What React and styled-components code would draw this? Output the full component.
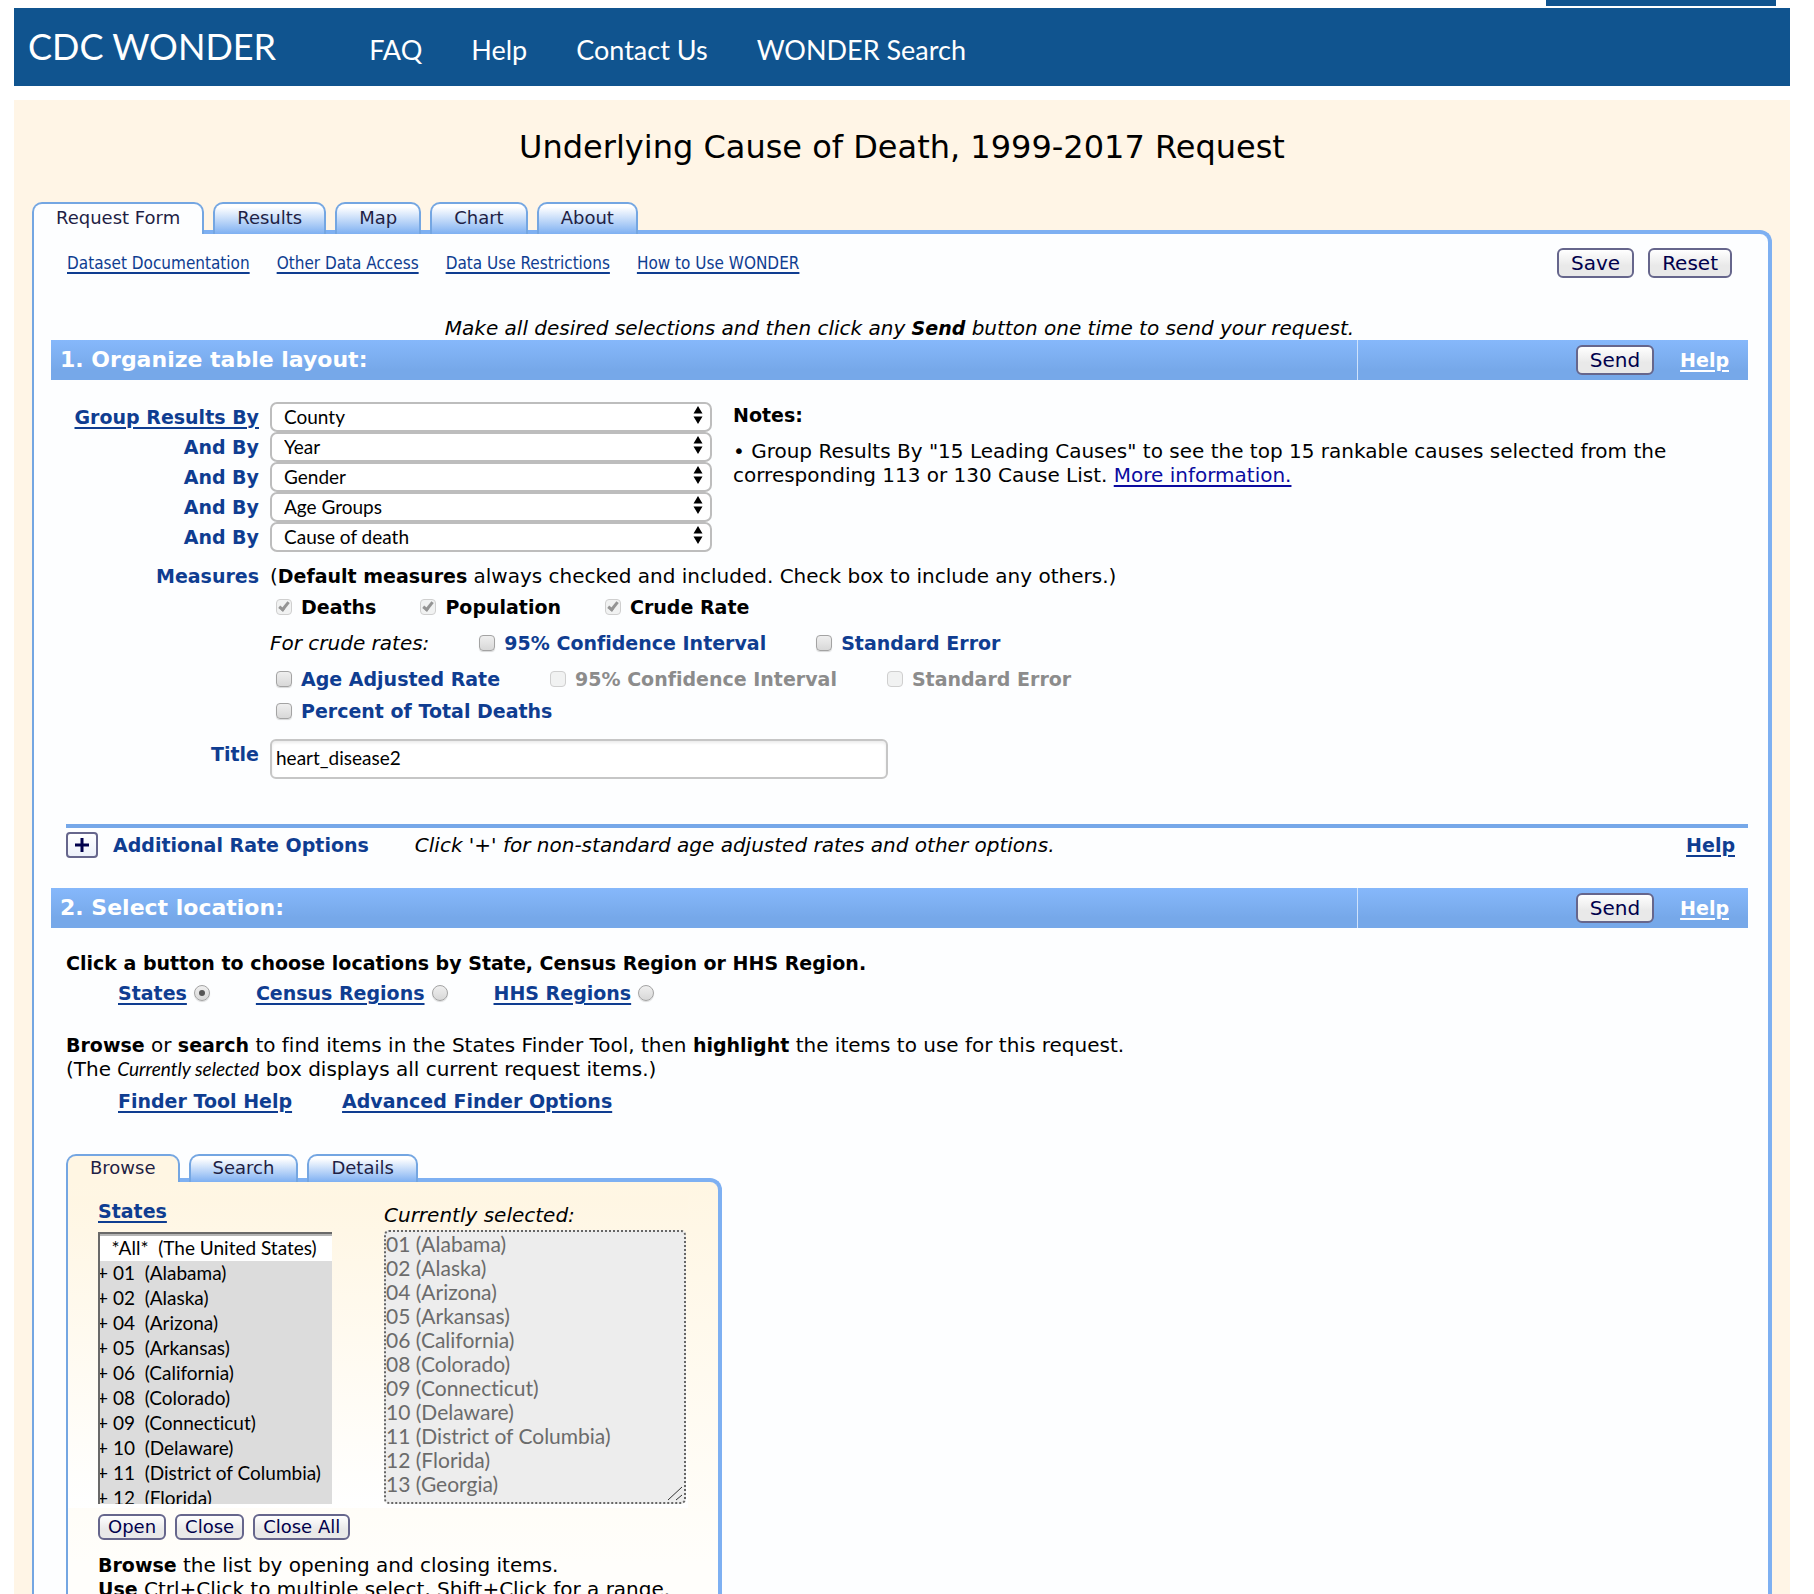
import React from 'react';
import styled, { createGlobalStyle, css } from 'styled-components';

const sans = '"DejaVu Sans", Verdana, sans-serif';
const humanist = 'Lato, Calibri, sans-serif';
const navy = '#0f3d91';
const edge = '#7eb0f2';

const GlobalStyle = createGlobalStyle`
  *, *::before, *::after { box-sizing: border-box; }
  body {
    margin: 0;
    background: #fff;
    color: #000;
    font: 20px/24px ${sans};
    font-variant-ligatures: none;
  }
  h1, h2, h3, p { margin: 0; }
  b, strong { font-size: 19px; }
`;

const Shell = styled.div`
  height: 100vh;
  overflow: auto;
  scrollbar-width: none;
  padding: 0 24px 0 14px;
`;

const TopStrip = styled.div`
  width: 230px;
  height: 6px;
  margin: 0 14px 2px auto;
  background: #10548f;
`;

const Header = styled.header`
  display: flex;
  align-items: baseline;
  height: 78px;
  padding: 16px 14px;
  margin-bottom: 14px;
  background: #10548f;
  color: #fff;
  font-family: ${humanist};
`;

const Brand = styled.a`
  color: inherit;
  text-decoration: none;
  font-size: 36px;
  line-height: 44px;
  margin-right: 93px;
`;

const Nav = styled.nav`
  display: flex;
  gap: 49px;
  font-size: 27px;
`;

const NavLink = styled.a`
  color: inherit;
  text-decoration: none;
`;

const Main = styled.main`
  min-height: calc(100% - 100px);
  padding: 27px 18px 0;
  background: #fff5e6;
`;

const PageTitle = styled.h1`
  margin-bottom: 35px;
  font-size: 32px;
  font-weight: 400;
  line-height: 40px;
  text-align: center;
`;

const TabBar = styled.div`
  position: relative;
  display: flex;
  gap: 9px;
  margin-bottom: -4px;
`;

const Tab = styled.button`
  height: ${(p) => (p.$small ? 28 : 32)}px;
  padding: 0 22px 2px;
  border: 2px solid #74a6e2;
  border-bottom: 0;
  border-radius: 10px 10px 0 0;
  background: ${(p) => p.$fill || 'linear-gradient(#fff 10%, #7eb0f2)'};
  color: #1f1f45;
  font: 18px/24px ${sans};
`;

const Panel = styled.section`
  border: solid ${edge};
  border-width: 4px 4px 0 2px;
  border-left-color: #74a6e2;
  border-radius: 0 12px 0 0;
`;

const FormPanel = styled(Panel)`
  min-height: 1500px;
  padding: 14px 20px 0 17px;
  background: #fdfeff;
`;

const Toolbar = styled.div`
  display: flex;
  align-items: center;
  justify-content: space-between;
  padding: 0 16px 0 15px;
  margin-bottom: 38px;
`;

const Cluster = styled.div`
  display: flex;
  align-items: center;
  gap: ${(p) => p.$gap}px;
  padding-left: ${(p) => p.$inset || 0}px;
  margin-top: ${(p) => p.$top || 0}px;
`;

const underline = css`
  text-decoration: underline;
  text-decoration-thickness: 2px;
  text-underline-offset: 3px;
`;

const DocLink = styled.a`
  ${underline}
  color: ${navy};
  font: 17px/26px "DejaVu Sans Condensed", Tahoma, sans-serif;
`;

const BoldLink = styled.a`
  ${underline}
  color: ${(p) => (p.$light ? '#fff' : navy)};
  font-size: 19px;
  font-weight: 700;
`;

const InlineLink = styled.a`
  ${underline}
  color: #0b0ba0;
`;

const Button = styled.button`
  height: 30px;
  padding: 0 12px;
  border: 2px solid #66668c;
  border-radius: 6px;
  background: linear-gradient(#fff, #e9e9e9 60%);
  color: #00004c;
  font: 20px/24px ${sans};
`;

const SmallButton = styled(Button)`
  height: 26px;
  padding: 0 8px;
  font-size: 18px;
  line-height: 22px;
`;

const ToggleButton = styled(SmallButton)`
  display: flex;
  align-items: center;
  justify-content: center;
  width: 32px;
  padding: 0;
  border-radius: 4px;
  background: linear-gradient(#fff, #edf1fa);
`;

const Instruction = styled.p`
  font-style: italic;
  text-align: center;
`;

const SectionBar = styled.header`
  display: flex;
  height: 40px;
  background: linear-gradient(#86b8fb, #76a8e9 75%);
  color: #fff;
`;

const SectionTitle = styled.h2`
  flex: 1;
  padding: 8px 9px;
  border-right: 1px solid #cfe2fb;
  font-size: 22px;
  line-height: 24px;
`;

const SectionActions = styled.div`
  display: flex;
  align-items: center;
  justify-content: flex-end;
  gap: 26px;
  width: 23%;
  padding-right: 19px;
`;

const LayoutRow = styled.div`
  display: flex;
  gap: 21px;
  padding-top: 22px;
  margin-bottom: 12px;
`;

const FieldRow = styled.div`
  display: grid;
  grid-template-columns: 208px auto;
  column-gap: 11px;
  align-items: ${(p) => p.$align || 'center'};
  margin-top: ${(p) => p.$top || 0}px;
`;

const FieldLabel = styled.label`
  color: ${navy};
  font-size: 19px;
  font-weight: 700;
  text-align: right;
  ${(p) => p.$linked && underline}
`;

const SelectWrap = styled.div`
  position: relative;
  width: 442px;
  height: 30px;
`;

const Select = styled.select`
  appearance: none;
  width: 100%;
  height: 100%;
  padding: 0 32px 2px 12px;
  border: 2px solid #bdbdbd;
  border-radius: 7px;
  background: #fff;
  color: #000;
  font: 19px ${humanist};
`;

const Arrows = styled.svg`
  position: absolute;
  top: 4px;
  right: 9px;
  pointer-events: none;
`;

const Notes = styled.aside`
  flex: 1;
  padding-top: 1px;
`;

const NotesTitle = styled.h3`
  margin-bottom: 12px;
  font-size: 19px;
`;

const Check = styled.label`
  display: flex;
  align-items: center;
  gap: 9px;
  color: ${(p) => (p.$muted ? '#8c8c8c' : p.$plain ? '#000' : navy)};
  font-size: 19px;
  font-weight: 700;
`;

const Tick = styled.input`
  appearance: none;
  display: grid;
  place-items: center;
  width: 16px;
  height: 16px;
  margin: 0;
  border: 1px solid #a3a3a3;
  border-radius: ${(p) => (p.type === 'radio' ? '50%' : '4px')};
  background: linear-gradient(#efefef, #d8d8d8);
  box-shadow: 0 1px 1px rgba(0, 0, 0, 0.15);
  &:disabled {
    border-color: #cfcfcf;
    background: #f1f2f2;
    box-shadow: none;
  }
  &[type='checkbox']:checked::after {
    content: '';
    width: 6px;
    height: 11px;
    margin-bottom: 3px;
    border: solid #949494;
    border-width: 0 3px 3px 0;
    transform: rotate(38deg);
  }
  &[type='radio']:checked::after {
    content: '';
    width: 6px;
    height: 6px;
    border-radius: 50%;
    background: #555;
  }
`;

const TitleInput = styled.input`
  width: 618px;
  height: 40px;
  padding: 0 4px 3px;
  border: 2px solid #c6c6c6;
  border-radius: 6px;
  background: #fff;
  box-shadow: inset 0 2px 3px rgba(0, 0, 0, 0.08);
  color: #000;
  font: 19px ${humanist};
`;

const LabelOffset = styled.div`
  display: grid;
  padding-top: 3px;
`;

const MoreOptions = styled.div`
  display: flex;
  align-items: center;
  padding: 4px 13px 0 0;
  margin: 45px 0 30px 15px;
  border-top: 4px solid #76a8e9;
  ${BoldLink} { margin-left: auto; }
`;

const OptionsTitle = styled.h3`
  margin: 0 46px 0 15px;
  color: ${navy};
  font-size: 19px;
`;

const LocationBody = styled.div`
  padding: 23px 0 0 15px;
`;

const Prompt = styled.h3`
  font-size: 19px;
`;

const Paragraph = styled.p`
  margin-top: ${(p) => p.$top}px;
`;

const BoxName = styled.i`
  font-family: ${humanist};
  font-size: 19px;
`;

const Finder = styled.div`
  width: 656px;
  margin-top: 41px;
`;

const FinderPanel = styled(Panel)`
  min-height: 440px;
  padding-top: 14px;
  background: linear-gradient(#fff6e3, #fffefb 380px);
`;

const FinderColumns = styled.div`
  display: grid;
  grid-template-columns: 234px 302px;
  column-gap: 52px;
  align-items: end;
  width: 620px;
  padding: 3px 2px 4px 30px;
  background: linear-gradient(#fff6e3, #fff);
`;

const Column = styled.div`
  display: flex;
  flex-direction: column;
  align-items: flex-start;
  gap: ${(p) => p.$gap}px;
`;

const StateList = styled.select`
  appearance: none;
  width: 234px;
  height: 272px;
  padding: 2px 0 0;
  border: 0;
  border-top: 2px solid #696969;
  border-left: 2px solid #696969;
  border-radius: 0;
  background: #dcdcdc;
  box-shadow: inset 0 2px #b5b5b5;
  color: #000;
  font: 19px ${humanist};
  font-variant-ligatures: none;
  text-indent: -3px;
  overflow: hidden;
`;

const StateOption = styled.option`
  height: 25px;
  min-height: 25px;
  padding: 0;
  background: ${(p) => (p.$all ? '#fff' : '#dcdcdc')};
`;

const SelectedLabel = styled.label`
  font-style: italic;
`;

const SelectedWrap = styled.div`
  position: relative;
`;

const SelectedBox = styled.textarea`
  display: block;
  width: 302px;
  height: 274px;
  padding: 0;
  border: 2px dotted #666;
  border-radius: 5px;
  background: #ededed;
  color: #6b6b6b;
  font: 21px/24px ${humanist};
  font-variant-ligatures: none;
  overflow: hidden;
  resize: none;
`;

const Grip = styled.svg`
  position: absolute;
  right: 3px;
  bottom: 3px;
  pointer-events: none;
`;

const FinderFooter = styled.div`
  padding: 6px 0 40px 30px;
`;

const groups = ['County', 'Year', 'Gender', 'Age Groups', 'Cause of death'];

const states = [
  ['01', 'Alabama'],
  ['02', 'Alaska'],
  ['04', 'Arizona'],
  ['05', 'Arkansas'],
  ['06', 'California'],
  ['08', 'Colorado'],
  ['09', 'Connecticut'],
  ['10', 'Delaware'],
  ['11', 'District of Columbia'],
  ['12', 'Florida'],
  ['13', 'Georgia'],
];

function GroupRow({ index, value }) {
  const id = `group-${index}`;
  return (
    <FieldRow>
      <FieldLabel htmlFor={id} $linked={index === 0}>
        {index === 0 ? 'Group Results By' : 'And By'}
      </FieldLabel>
      <SelectWrap>
        <Select id={id} defaultValue={value}>
          {groups.map((g) => (
            <option key={g}>{g}</option>
          ))}
        </Select>
        <Arrows width="10" height="18" viewBox="0 0 10 18" aria-hidden="true">
          <path d="M5 0 9.5 7.5H.5ZM5 18 .5 10.5h9Z" />
        </Arrows>
      </SelectWrap>
    </FieldRow>
  );
}

function CheckField({ children, checked, disabled, muted, plain }) {
  return (
    <Check $muted={muted} $plain={plain}>
      <Tick type="checkbox" defaultChecked={checked} disabled={disabled} />
      {children}
    </Check>
  );
}

function SectionHeading({ children }) {
  return (
    <SectionBar>
      <SectionTitle>{children}</SectionTitle>
      <SectionActions>
        <Button>Send</Button>
        <BoldLink $light href="#help">Help</BoldLink>
      </SectionActions>
    </SectionBar>
  );
}

function RadioField({ children, id, checked }) {
  return (
    <Cluster $gap={7}>
      <BoldLink href={`#${id}`} id={`${id}-label`}>{children}</BoldLink>
      <Tick type="radio" name="location" aria-labelledby={`${id}-label`} defaultChecked={checked} />
    </Cluster>
  );
}

export default function App() {
  return (
    <Shell>
      <GlobalStyle />
      <TopStrip />
      <Header>
        <Brand href="#home">CDC WONDER</Brand>
        <Nav>
          <NavLink href="#faq">FAQ</NavLink>
          <NavLink href="#help">Help</NavLink>
          <NavLink href="#contact">Contact Us</NavLink>
          <NavLink href="#search">WONDER Search</NavLink>
        </Nav>
      </Header>
      <Main>
        <PageTitle>Underlying Cause of Death, 1999-2017 Request</PageTitle>
        <TabBar>
          <Tab $fill="#fdfeff">Request Form</Tab>
          <Tab>Results</Tab>
          <Tab>Map</Tab>
          <Tab>Chart</Tab>
          <Tab>About</Tab>
        </TabBar>
        <FormPanel>
          <Toolbar>
            <Cluster $gap={27} $inset={1}>
              <DocLink href="#docs">Dataset Documentation</DocLink>
              <DocLink href="#other">Other Data Access</DocLink>
              <DocLink href="#restrictions">Data Use Restrictions</DocLink>
              <DocLink href="#howto">How to Use WONDER</DocLink>
            </Cluster>
            <Cluster $gap={14}>
              <Button>Save</Button>
              <Button>Reset</Button>
            </Cluster>
          </Toolbar>
          <Instruction>
            Make all desired selections and then click any <b>Send</b> button one time to send your request.
          </Instruction>

          <SectionHeading>1. Organize table layout:</SectionHeading>
          <LayoutRow>
            <div>
              {groups.map((g, i) => (
                <GroupRow key={g} index={i} value={g} />
              ))}
            </div>
            <Notes>
              <NotesTitle>Notes:</NotesTitle>
              <p>
                • Group Results By "15 Leading Causes" to see the top 15 rankable causes selected from the
                corresponding 113 or 130 Cause List. <InlineLink href="#more">More information.</InlineLink>
              </p>
            </Notes>
          </LayoutRow>
          <FieldRow $align="start">
            <FieldLabel as="span">Measures</FieldLabel>
            <div>
              <p>
                (<b>Default measures</b> always checked and included. Check box to include any others.)
              </p>
              <Cluster $gap={44} $inset={6} $top={7}>
                <CheckField checked disabled plain>Deaths</CheckField>
                <CheckField checked disabled plain>Population</CheckField>
                <CheckField checked disabled plain>Crude Rate</CheckField>
              </Cluster>
              <Cluster $gap={50} $top={12}>
                <i>For crude rates:</i>
                <CheckField>95% Confidence Interval</CheckField>
                <CheckField>Standard Error</CheckField>
              </Cluster>
              <Cluster $gap={50} $inset={6} $top={12}>
                <CheckField>Age Adjusted Rate</CheckField>
                <CheckField disabled muted>95% Confidence Interval</CheckField>
                <CheckField disabled muted>Standard Error</CheckField>
              </Cluster>
              <Cluster $gap={44} $inset={6} $top={8}>
                <CheckField>Percent of Total Deaths</CheckField>
              </Cluster>
            </div>
          </FieldRow>
          <FieldRow $align="start" $top={16}>
            <LabelOffset>
              <FieldLabel htmlFor="request-title">Title</FieldLabel>
            </LabelOffset>
            <TitleInput id="request-title" defaultValue="heart_disease2" />
          </FieldRow>
          <MoreOptions>
            <ToggleButton aria-label="Expand additional rate options">
              <svg width="14" height="14" viewBox="0 0 14 14" aria-hidden="true">
                <path d="M7 0v14M0 7h14" stroke="#00004c" strokeWidth="3" />
              </svg>
            </ToggleButton>
            <OptionsTitle>Additional Rate Options</OptionsTitle>
            <i>Click '+' for non-standard age adjusted rates and other options.</i>
            <BoldLink href="#rates-help">Help</BoldLink>
          </MoreOptions>

          <SectionHeading>2. Select location:</SectionHeading>
          <LocationBody>
            <Prompt>Click a button to choose locations by State, Census Region or HHS Region.</Prompt>
            <Cluster $gap={46} $inset={52} $top={6}>
              <RadioField id="states" checked>States</RadioField>
              <RadioField id="census">Census Regions</RadioField>
              <RadioField id="hhs">HHS Regions</RadioField>
            </Cluster>
            <Paragraph $top={28}>
              <b>Browse</b> or <b>search</b> to find items in the States Finder Tool, then <b>highlight</b> the
              items to use for this request.
              <br />
              (The <BoxName>Currently selected</BoxName> box displays all current request items.)
            </Paragraph>
            <Cluster $gap={50} $inset={52} $top={8}>
              <BoldLink href="#finder-help">Finder Tool Help</BoldLink>
              <BoldLink href="#finder-options">Advanced Finder Options</BoldLink>
            </Cluster>

            <Finder>
              <TabBar>
                <Tab $small $fill="#fff6e3">Browse</Tab>
                <Tab $small>Search</Tab>
                <Tab $small>Details</Tab>
              </TabBar>
              <FinderPanel>
                <FinderColumns>
                  <Column $gap={9}>
                    <BoldLink href="#states-list" id="list-label">States</BoldLink>
                    <StateList multiple size={11} aria-labelledby="list-label">
                      <StateOption $all>{'\u00a0\u00a0\u00a0*All*\u00a0\u00a0(The United States)'}</StateOption>
                      {states.map(([code, name]) => (
                        <StateOption key={code}>{`+ ${code}\u00a0\u00a0(${name})`}</StateOption>
                      ))}
                    </StateList>
                  </Column>
                  <Column $gap={3}>
                    <SelectedLabel htmlFor="selected">Currently selected:</SelectedLabel>
                    <SelectedWrap>
                      <SelectedBox
                        id="selected"
                        readOnly
                        value={states.map(([code, name]) => `${code} (${name})`).join('\n')}
                      />
                      <Grip width="16" height="15" viewBox="0 0 16 15" fill="none" stroke="#333" aria-hidden="true">
                        <path d="M1 14 15 1M9 14l6-5" />
                      </Grip>
                    </SelectedWrap>
                  </Column>
                </FinderColumns>
                <FinderFooter>
                  <Cluster $gap={9}>
                    <SmallButton>Open</SmallButton>
                    <SmallButton>Close</SmallButton>
                    <SmallButton>Close All</SmallButton>
                  </Cluster>
                  <Paragraph $top={13}>
                    <b>Browse</b> the list by opening and closing items.
                    <br />
                    <b>Use</b> Ctrl+Click to multiple select, Shift+Click for a range.
                  </Paragraph>
                </FinderFooter>
              </FinderPanel>
            </Finder>
          </LocationBody>
        </FormPanel>
      </Main>
    </Shell>
  );
}
